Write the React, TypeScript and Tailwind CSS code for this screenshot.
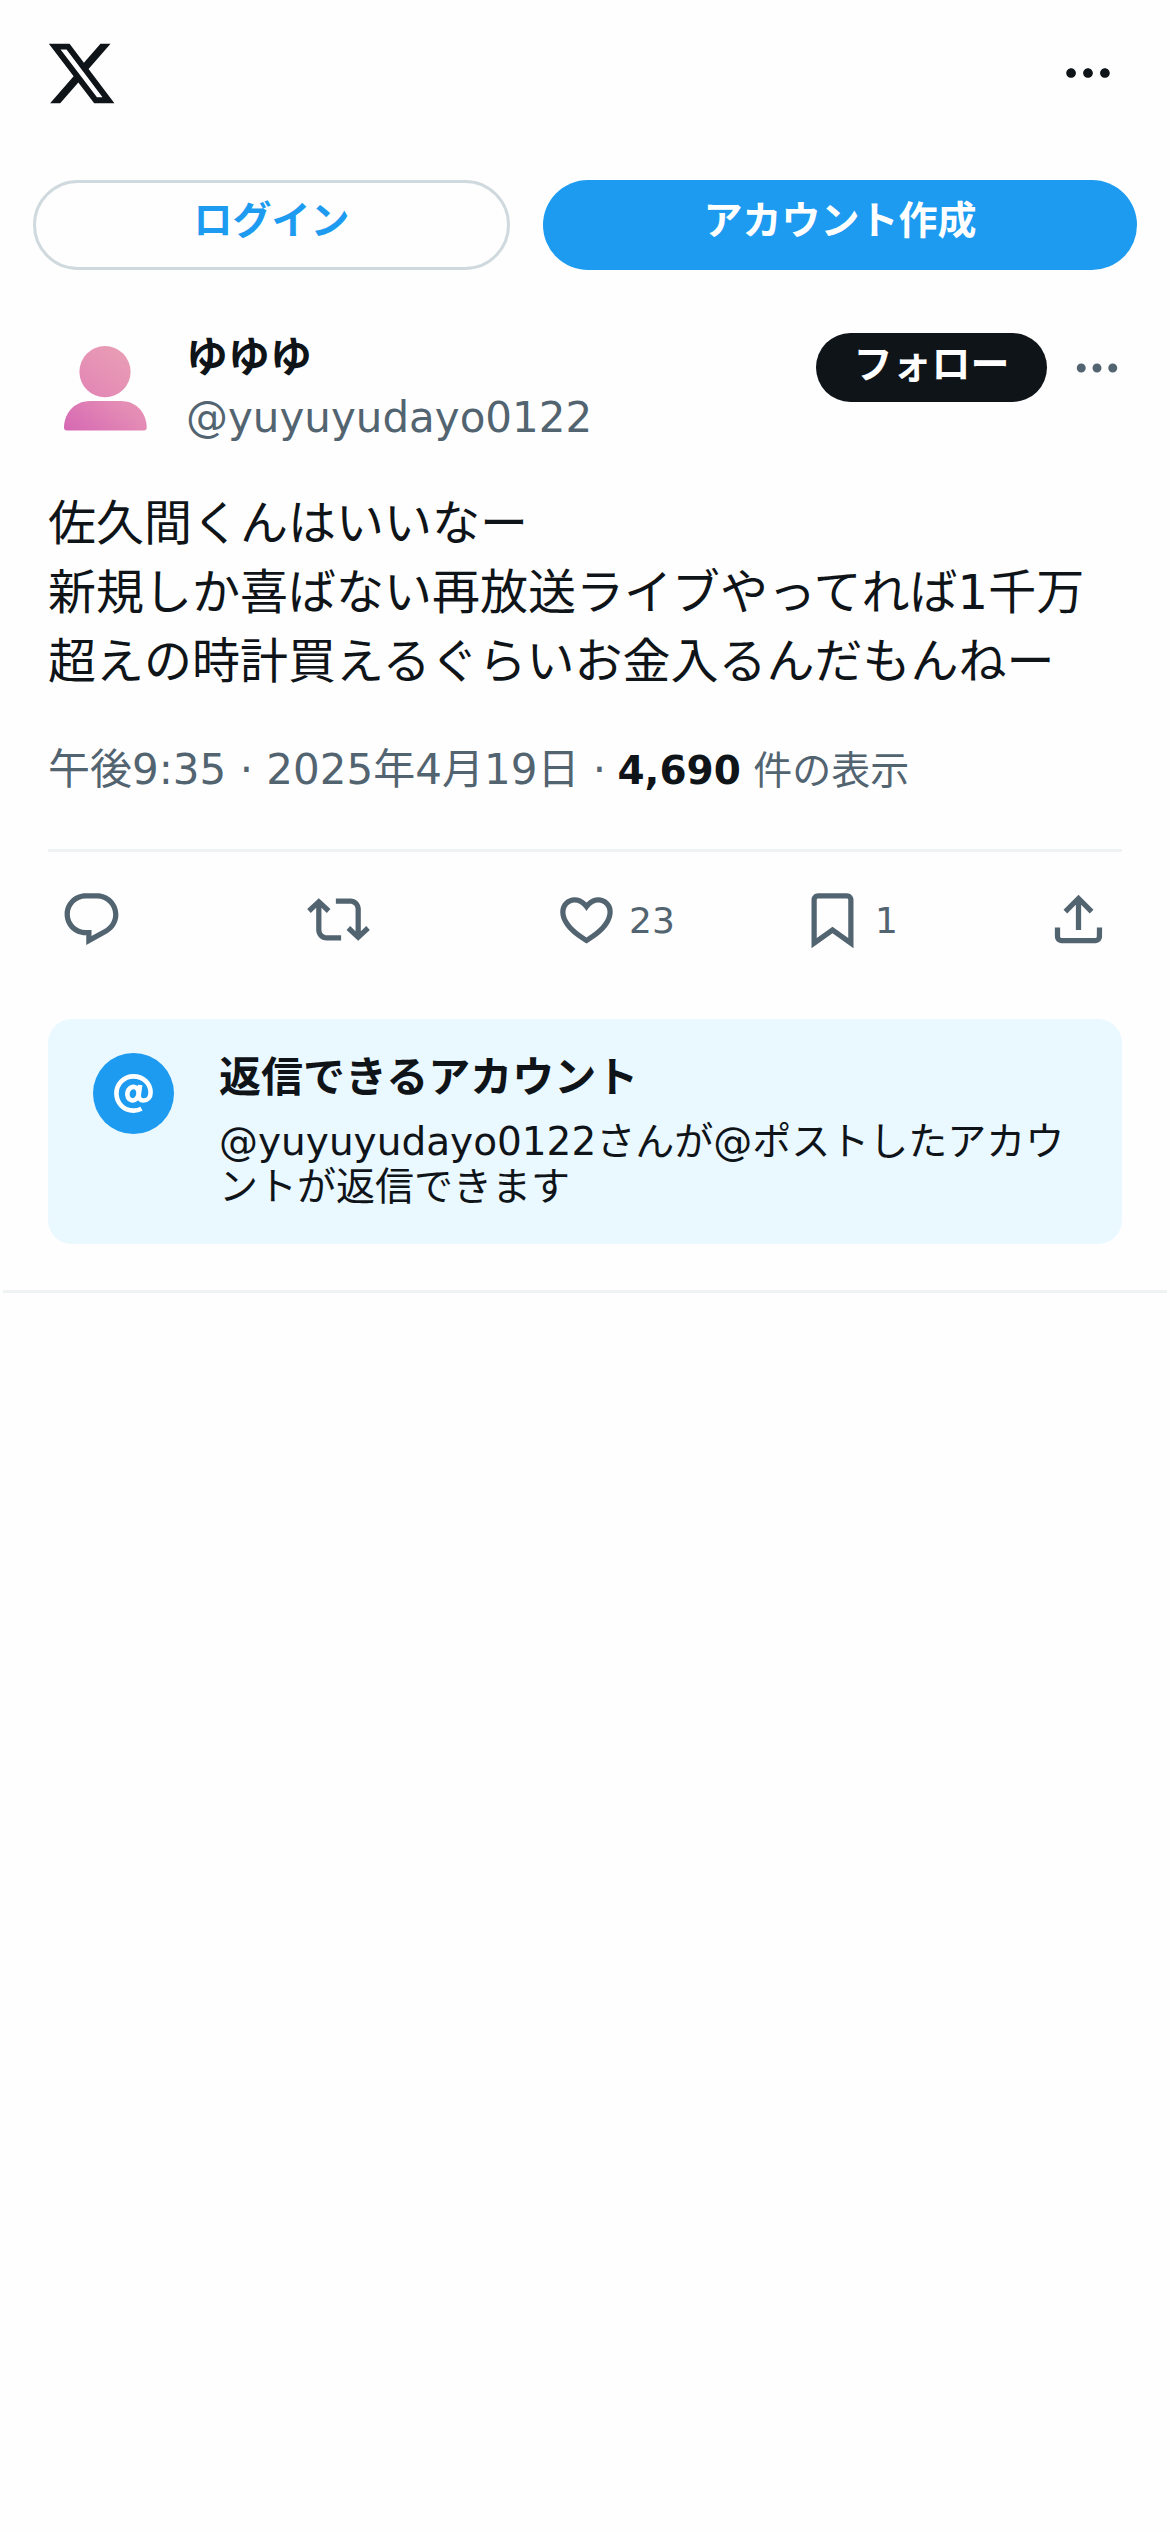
import { ReactNode } from "react";

const Icon = ({ className, children }: { className: string; children: ReactNode }) => (
  <svg viewBox="0 0 24 24" fill="currentColor" aria-hidden="true" className={className}>
    {children}
  </svg>
);

const More = ({ className }: { className: string }) => (
  <Icon className={className}>
    <path d="M3 12c0-1.1.9-2 2-2s2 .9 2 2-.9 2-2 2-2-.9-2-2zm9 2c1.1 0 2-.9 2-2s-.9-2-2-2-2 .9-2 2 .9 2 2 2zm7 0c1.1 0 2-.9 2-2s-.9-2-2-2-2 .9-2 2 .9 2 2 2z" />
  </Icon>
);

const TopBar = () => (
  <header className="flex h-[146px] items-center justify-between pl-[45px] pr-[53px]">
    <a href="#" aria-label="X">
      <Icon className="size-[73px]">
        <path d="M18.244 2.25h3.308l-7.227 8.26 8.502 11.24H16.17l-5.214-6.817L4.99 21.75H1.68l7.73-8.835L1.254 2.25H8.08l4.713 6.231zm-1.161 17.52h1.833L7.084 4.126H5.117z" />
      </Icon>
    </a>
    <button aria-label="もっと見る">
      <More className="size-[58px]" />
    </button>
  </header>
);

const AuthButtons = () => (
  <div className="mt-[34px] flex gap-[33px] px-[33px] text-[39px] font-bold leading-[75px]">
    <button className="h-[90px] w-[477px] rounded-full border-[3px] border-[#cfd9de] text-[#1d9bf0]">
      <span className="block h-[84px]">ログイン</span>
    </button>
    <button className="h-[90px] flex-1 rounded-full bg-[#1d9bf0] text-white">
      <span className="block h-[84px]">アカウント作成</span>
    </button>
  </div>
);

const Avatar = () => (
  <svg viewBox="0 0 114 114" className="size-[114px]" aria-hidden="true">
    <defs>
      <linearGradient id="avatar" x1="24" y1="104" x2="90" y2="20" gradientUnits="userSpaceOnUse">
        <stop offset="0" stopColor="#d567b3" />
        <stop offset="0.5" stopColor="#e48bb5" />
        <stop offset="1" stopColor="#e9a0b4" />
      </linearGradient>
    </defs>
    <circle cx="57" cy="38.7" r="25.6" fill="url(#avatar)" />
    <path d="M42 68h31c17 0 25.700 14 25.700 26.500 0 2-1 3-3 3H19c-2 0-3-1-3-3C16 82 25 68 42 68z" fill="url(#avatar)" />
  </svg>
);

const AuthorRow = () => (
  <div className="-mr-[2px] mt-[63px] flex h-[114px]">
    <Avatar />
    <div className="ml-[24px] flex-1 text-[42px]">
      <p className="h-[48px] font-bold leading-[49px]">ゆゆゆ</p>
      <p className="mt-[10px] leading-[54px] text-[#536471]">@yuyuyudayo0122</p>
    </div>
    <button className="h-[69px] w-[231px] rounded-full bg-[#0f1419] text-[39px] font-bold leading-[63px] text-white">
      <span className="block h-[69px]">フォロー</span>
    </button>
    <button aria-label="その他" className="ml-[23px] h-[69px] text-[#536471]">
      <More className="size-[54px]" />
    </button>
  </div>
);

const Actions = () => (
  <div className="flex h-[135px] items-center text-[36px] text-[#536471]">
    <Icon className="ml-[12px] size-[63px]">
      <path d="M1.751 10c0-4.42 3.584-8 8.005-8h4.366c4.49 0 8.129 3.64 8.129 8.13 0 2.96-1.607 5.68-4.196 7.11l-8.054 4.46v-3.69h-.067c-4.49.1-8.183-3.51-8.183-8.01zm8.005-6c-3.317 0-6.005 2.69-6.005 6 0 3.37 2.77 6.08 6.138 6.01l.351-.01h1.761v2.3l5.087-2.81c1.951-1.08 3.163-3.13 3.163-5.36 0-3.39-2.744-6.13-6.129-6.13H9.756z" />
    </Icon>
    <Icon className="ml-[184px] size-[63px]">
      <path d="M4.5 3.88l4.432 4.14-1.364 1.46L5.5 7.55V16c0 1.1.896 2 2 2H13v2H7.5c-2.209 0-4-1.79-4-4V7.55L1.432 9.48.068 8.02 4.5 3.88zM16.5 6H11V4h5.5c2.209 0 4 1.79 4 4v8.45l2.068-1.93 1.364 1.46-4.432 4.14-4.432-4.14 1.364-1.46 2.068 1.93V8c0-1.1-.896-2-2-2z" />
    </Icon>
    <Icon className="ml-[185px] size-[63px]">
      <path d="M16.697 5.5c-1.222-.06-2.679.51-3.89 2.16l-.805 1.09-.806-1.09C9.984 6.01 8.526 5.44 7.304 5.5c-1.243.07-2.349.78-2.91 1.91-.552 1.12-.633 2.78.479 4.82 1.074 1.97 3.257 4.27 7.129 6.61 3.87-2.34 6.052-4.64 7.126-6.61 1.111-2.04 1.03-3.7.477-4.82-.561-1.13-1.666-1.84-2.908-1.91zm4.187 7.69c-1.351 2.48-4.001 5.12-8.379 7.67l-.503.3-.504-.3c-4.379-2.55-7.029-5.19-8.382-7.67-1.36-2.5-1.41-4.86-.514-6.67.887-1.79 2.647-2.91 4.601-3.01 1.651-.09 3.368.56 4.798 2.01 1.429-1.45 3.146-2.1 4.796-2.01 1.954.1 3.714 1.22 4.601 3.01.896 1.81.846 4.17-.514 6.67z" />
    </Icon>
    <span className="ml-[11px] w-[50px] pt-[2px]">23</span>
    <Icon className="ml-[122px] size-[63px]">
      <path d="M4 4.5C4 3.12 5.119 2 6.5 2h11C18.881 2 20 3.12 20 4.5v18.44l-8-5.71-8 5.71V4.5zM6.5 4c-.276 0-.5.22-.5.5v14.56l6-4.29 6 4.29V4.5c0-.28-.224-.5-.5-.5h-11z" />
    </Icon>
    <span className="ml-[11px] pt-[2px]">1</span>
    <Icon className="ml-auto mr-[12px] size-[63px]">
      <path d="M12 2.59l5.7 5.7-1.41 1.42L13 6.41V16h-2V6.41l-3.3 3.3-1.41-1.42L12 2.59zM21 15l-.02 3.51c0 1.38-1.12 2.49-2.5 2.49H5.5C4.11 21 3 19.88 3 18.5V15h2v3.5c0 .28.22.5.5.5h12.98c.28 0 .5-.22.5-.5L19 15h2z" />
    </Icon>
  </div>
);

const ReplyNotice = () => (
  <section className="mt-[32px] flex h-[225px] rounded-[24px] bg-[#eaf8ff] pl-[45px] pt-[34px]">
    <div className="flex size-[81px] items-center justify-center rounded-full bg-[#1d9bf0] text-white">
      <svg viewBox="0 0 24 24" fill="none" stroke="currentColor" strokeWidth="2.7" aria-hidden="true" className="size-[41px] overflow-visible">
        <ellipse cx="11.700" cy="12.100" rx="3.300" ry="4" transform="rotate(12 11.700 12.100)" />
        <path d="M15.900 7l-.8 5.600c-.3 2 .8 3.500 2.700 3.500 2.500 0 4.200-1.900 4.200-4.600C22 6 17.600 2 12 2 6.300 2 2 6.500 2 12s4.300 10 10 10c1.700 0 3.300-.4 4.700-1.100" />
      </svg>
    </div>
    <div className="ml-[45px] w-[860px]">
      <h2 className="h-[66px] text-[42px] font-bold leading-[49px]">返信できるアカウント</h2>
      <p className="text-[39px] leading-[45px]">@yuyuyudayo0122さんが@ポストしたアカウントが返信できます</p>
    </div>
  </section>
);

const App = () => {
  return (
    <div lang="ja" className="min-h-[2532px] bg-[#fefefe] font-['DejaVu_Sans','Noto_Sans_CJK_JP',sans-serif] text-[#0f1419]">
      <TopBar />
      <AuthButtons />
      <article className="px-[48px]">
        <AuthorRow />
        <p className="mt-[42px] text-[48px] leading-[69px]">
          佐久間くんはいいなー
          <br />
          新規しか喜ばない再放送ライブやってれば1千万超えの時計買えるぐらいお金入るんだもんねー
        </p>
        <div className="mt-[44px] h-[112px] border-b-[3px] border-[#eff3f4] text-[42px] leading-[60px] text-[#536471]">
          午後9:35 · 2025年4月19日 · <span className="-ml-[2px] text-[39px]"><b className="text-[#0f1419]">4,690</b> 件の表示</span>
        </div>
        <Actions />
        <ReplyNotice />
      </article>
      <hr className="mx-[3px] mt-[46px] border-t-[3px] border-[#eff3f4]" />
    </div>
  );
};

export default App;
